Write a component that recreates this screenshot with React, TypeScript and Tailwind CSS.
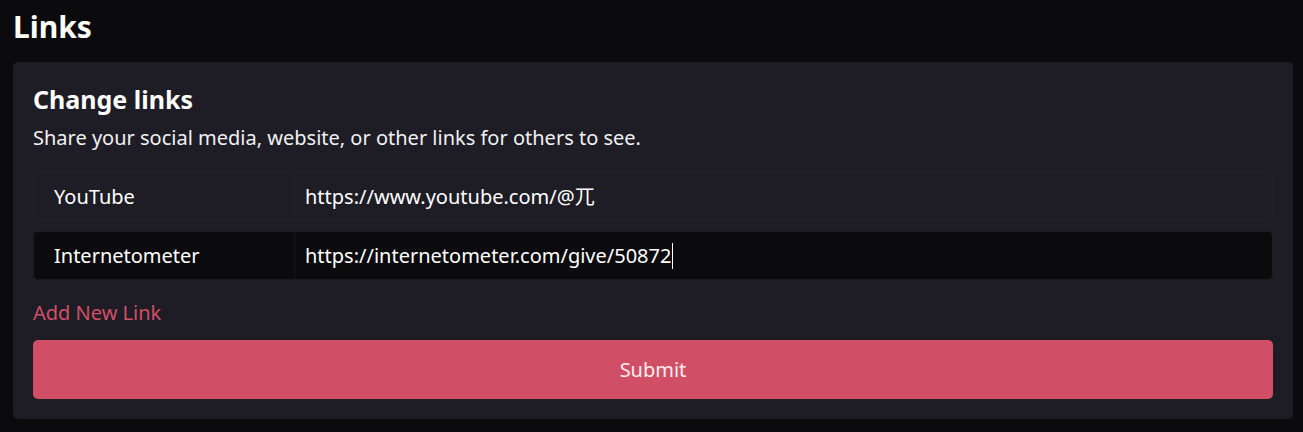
import React, { useState } from "react";

interface LinkRow {
  id: number;
  label: string;
  url: string;
}

const initialLinks: LinkRow[] = [
  { id: 1, label: "YouTube", url: "https://www.youtube.com/@兀" },
  { id: 2, label: "Internetometer", url: "https://internetometer.com/give/50872" },
];

const App = () => {
  const [links] = useState<LinkRow[]>(initialLinks);
  const focusedId = 2;

  return (
    <div
      className="min-h-[432px] bg-[#0b0b0d] text-white pl-[13px] pr-[10px] pt-[8px] pb-[12px]"
      style={{ fontFamily: '"Noto Sans", "Noto Sans CJK SC", sans-serif' }}
    >
      <h1 className="text-[30px] font-bold leading-[38px]">Links</h1>

      <div className="mt-[16px] rounded-[5px] bg-[#1e1d25] p-[20px]">
        <h2 className="text-[25px] font-bold leading-[35px]">Change links</h2>
        <p className="mt-[6px] text-[20px] leading-[30px] text-[#f1f1f3]">
          Share your social media, website, or other links for others to see.
        </p>

        {/* link rows */}
        <div className="mt-[19px] flex flex-col gap-[10px]">
          {links.map((link) => {
            const focused = link.id === focusedId;
            return (
              <div
                key={link.id}
                className={`flex h-[49px] rounded-[5px] border text-[20px] ${
                  focused
                    ? "bg-[#0b0b0d] border-[#1b1a21]"
                    : "bg-[#1e1d25] border-[#24232b]"
                }`}
              >
                <div
                  className={`w-[261px] shrink-0 flex items-center px-[20px] border-r ${
                    focused ? "border-[#18171d]" : "border-[#24232b]"
                  }`}
                >
                  {link.label}
                </div>
                <div className="flex-1 flex items-center px-[10px]">
                  <span>{link.url}</span>
                  {focused && (
                    <span className="ml-[1px] inline-block h-[26px] w-[1px] bg-white" />
                  )}
                </div>
              </div>
            );
          })}
        </div>

        <div className="mt-[18px] text-[20px] leading-[30px] text-[#d24f67]">
          Add New Link
        </div>

        <button className="mt-[12px] flex h-[59px] w-full items-center justify-center rounded-[5px] bg-[#d14f66] text-[20px] text-[#fbeef0]">
          Submit
        </button>
      </div>
    </div>
  );
};

export default App;
